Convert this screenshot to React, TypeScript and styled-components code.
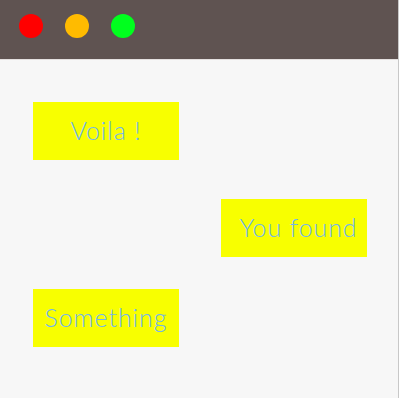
import React from 'react'
import styled, { createGlobalStyle } from 'styled-components'

const GlobalStyle = createGlobalStyle`
	html, body {
		margin: 0;
		padding: 0;
		background: #ffffff;
	}
`

const Window = styled.div`
	width: 398px;
	height: 398px;
	border-right: 1px solid #c8c8c8;
	background: #f7f7f7;
	display: flex;
	flex-direction: column;
	font-family: 'Lato', 'Open Sans', sans-serif;
`

const TitleBar = styled.div`
	height: 60px;
	background: #5f5351;
	display: flex;
	align-items: center;
	gap: 22px;
	padding: 0 0 0 19px;
	box-sizing: border-box;
	border-bottom: 1px solid #e4e0df;
`

const Dot = styled.span<{ $color: string }>`
	width: 24px;
	height: 24px;
	border-radius: 50%;
	background: ${p => p.$color};
	margin-top: -7px;
`

const Content = styled.div`
	flex: 1;
	display: flex;
	flex-direction: column;
	padding: 42px 0 0 33px;
`

const Card = styled.div<{ $right?: boolean; $shift?: number; $top?: number }>`
	width: 146px;
	height: 58px;
	margin-top: ${p => p.$top ?? 0}px;
	background: #f8ff00;
	color: #70b5ee;
	font-size: 25px;
	font-weight: 300;
	letter-spacing: 0.9px;
	display: flex;
	align-items: center;
	justify-content: center;
	box-sizing: border-box;
	padding-left: ${p => p.$shift ?? 0}px;
	padding-bottom: 3px;
	align-self: ${p => (p.$right ? 'flex-end' : 'flex-start')};
	margin-right: ${p => (p.$right ? '31px' : '0')};
	white-space: nowrap;
`

export default function App() {
	return (
		<>
			<GlobalStyle />
			<Window>
				<TitleBar>
					<Dot $color="#ff0000" />
					<Dot $color="#ffbb00" />
					<Dot $color="#00ff1e" />
				</TitleBar>
				<Content>
					<Card>Voila !</Card>
					<Card $right $shift={9} $top={39}>You found</Card>
					<Card $top={32}>Something</Card>
				</Content>
			</Window>
		</>
	)
}
